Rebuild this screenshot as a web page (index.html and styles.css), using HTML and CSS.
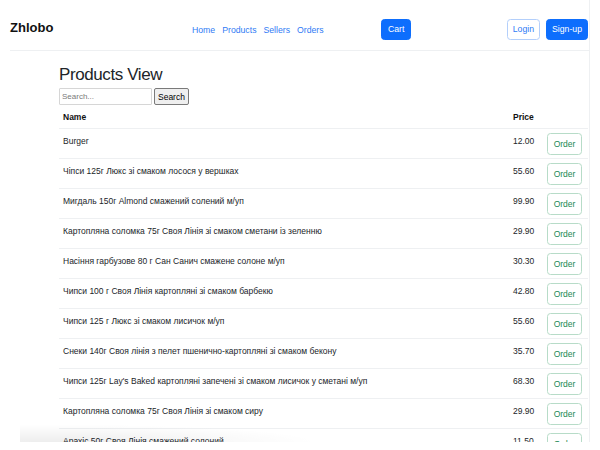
FILE: index.html
```html
<!DOCTYPE html>
<html lang="uk">
<head>
<meta charset="utf-8">
<title>Zhlobo - Products View</title>
<link rel="stylesheet" href="styles.css">
</head>
<body>
<div class="page">
  <nav class="navbar">
    <a class="brand" href="#">Zhlobo</a>
    <ul class="links">
      <li><a href="#">Home</a></li>
      <li><a href="#">Products</a></li>
      <li><a href="#">Sellers</a></li>
      <li><a href="#">Orders</a></li>
    </ul>
    <button class="btn btn-primary">Cart</button>
    <div class="auth">
      <button class="btn btn-outline-primary">Login</button>
      <button class="btn btn-primary">Sign-up</button>
    </div>
  </nav>
  <main class="container">
    <h3 class="title">Products View</h3>
    <form class="search">
      <input class="search-input" type="text" placeholder="Search...">
      <button class="search-btn" type="button">Search</button>
    </form>
    <table class="table">
      <thead>
        <tr><th class="c-name">Name</th><th class="c-price">Price</th><th class="c-act"></th></tr>
      </thead>
      <tbody>
        <tr><td>Burger</td><td>12.00</td><td><button class="btn-order">Order</button></td></tr>
        <tr><td>Чіпси 125г Люкс зі смаком лосося у вершках</td><td>55.60</td><td><button class="btn-order">Order</button></td></tr>
        <tr><td>Мигдаль 150г Almond смажений солений м/уп</td><td>99.90</td><td><button class="btn-order">Order</button></td></tr>
        <tr><td>Картопляна соломка 75г Своя Лінія зі смаком сметани із зеленню</td><td>29.90</td><td><button class="btn-order">Order</button></td></tr>
        <tr><td>Насіння гарбузове 80 г Сан Санич смажене солоне м/уп</td><td>30.30</td><td><button class="btn-order">Order</button></td></tr>
        <tr><td>Чипси 100 г Своя Лінія картопляні зі смаком барбекю</td><td>42.80</td><td><button class="btn-order">Order</button></td></tr>
        <tr><td>Чипси 125 г Люкс зі смаком лисичок м/уп</td><td>55.60</td><td><button class="btn-order">Order</button></td></tr>
        <tr><td>Снеки 140г Своя лінія з пелет пшенично-картопляні зі смаком бекону</td><td>35.70</td><td><button class="btn-order">Order</button></td></tr>
        <tr><td>Чипси 125г Lay's Baked картопляні запечені зі смаком лисичок у сметані м/уп</td><td>68.30</td><td><button class="btn-order">Order</button></td></tr>
        <tr><td>Картопляна соломка 75г Своя Лінія зі смаком сиру</td><td>29.90</td><td><button class="btn-order">Order</button></td></tr>
        <tr><td>Арахіс 50г Своя Лінія смажений солоний</td><td>11.50</td><td><button class="btn-order">Order</button></td></tr>
      </tbody>
    </table>
  </main>
  <div class="shade"></div>
</div>
</body>
</html>
```

FILE: styles.css
```css
* { box-sizing: border-box; }

html, body {
  margin: 0;
  padding: 0;
  background: #fff;
}

body {
  font-family: "Liberation Sans", Arial, sans-serif;
  color: #212529;
  width: 600px;
  height: 450px;
  overflow: hidden;
}

.page {
  position: relative;
  width: 590px;
  height: 442px;
  overflow: hidden;
  border-right: 1px solid #eef0f2;
}

.navbar {
  display: flex;
  align-items: center;
  margin-left: 10px;
  height: 51px;
  border-bottom: 1px solid #eef0f2;
  padding-top: 8px;
}

.brand {
  flex: 0 0 182px;
  font-size: 13px;
  font-weight: bold;
  color: #111;
  text-decoration: none;
  margin-top: -3px;
}

.links {
  flex: 0 0 189px;
  display: flex;
  gap: 7px;
  list-style: none;
  margin: -3px 0 0;
  padding: 0;
  line-height: 1;
}

.links a {
  font-size: 8.7px;
  color: #2f7bf5;
  text-decoration: none;
}

.btn {
  font-family: inherit;
  font-size: 8.7px;
  height: 21px;
  padding: 0 5px;
  border-radius: 3.5px;
  border: 1px solid #0d6efd;
  cursor: pointer;
}

.btn-primary {
  background: #0d6efd;
  color: #fff;
}

.navbar > .btn-primary { padding: 0 6px; }

.btn-outline-primary {
  background: #fff;
  color: #2f7bf5;
  border-color: #b3cffb;
  border-width: 1.5px;
}

.auth {
  margin-left: auto;
  margin-right: 1px;
  display: flex;
  gap: 6px;
}

.container {
  padding: 0 1px 0 59px;
}

.title {
  font-size: 17px;
  font-weight: 500;
  line-height: 1.2;
  margin: 14px 0 3px;
  letter-spacing: -0.4px;
  color: #212529;
}

.search {
  display: flex;
  gap: 2px;
  margin: 0;
}

.search-input {
  width: 93px;
  height: 17px;
  font-family: inherit;
  font-size: 8px;
  padding: 0 2px;
  border: 1px solid #d6d6d6;
  border-radius: 1px;
}

.search-input::placeholder { color: #7a7a7a; }

.search-btn {
  height: 17px;
  font-family: inherit;
  font-size: 8.5px;
  padding: 0 3px;
  background: #efefef;
  border: 1px solid #7a7a7a;
  border-radius: 2px;
  color: #000;
}

.table {
  width: 100%;
  border-collapse: collapse;
  margin-top: 1px;
  font-size: 8.5px;
}

.table th, .table td {
  text-align: left;
  vertical-align: top;
  padding: 4px 4px;
  border-bottom: 1px solid #eef0f2;
}

.table th {
  font-weight: bold;
  color: #111;
  line-height: 14px;
}

.table td { padding: 5px 4px 4px; line-height: 14px; }

.c-price { width: 34px; }
.c-act { width: 45px; }

.table td:last-child { padding: 4px 6px 3px 4px; }

.btn-order {
  display: block;
  width: 35px;
  height: 22px;
  font-family: inherit;
  font-size: 8.5px;
  color: #198754;
  background: #fff;
  border: 1px solid #b7dcc8;
  border-radius: 3.5px;
  padding: 0;
}

.shade {
  position: absolute;
  left: 20px;
  bottom: 0;
  width: 300px;
  height: 18px;
  background: radial-gradient(ellipse at 10% 100%, rgba(0,0,0,0.07), rgba(0,0,0,0) 70%);
  pointer-events: none;
}
```
